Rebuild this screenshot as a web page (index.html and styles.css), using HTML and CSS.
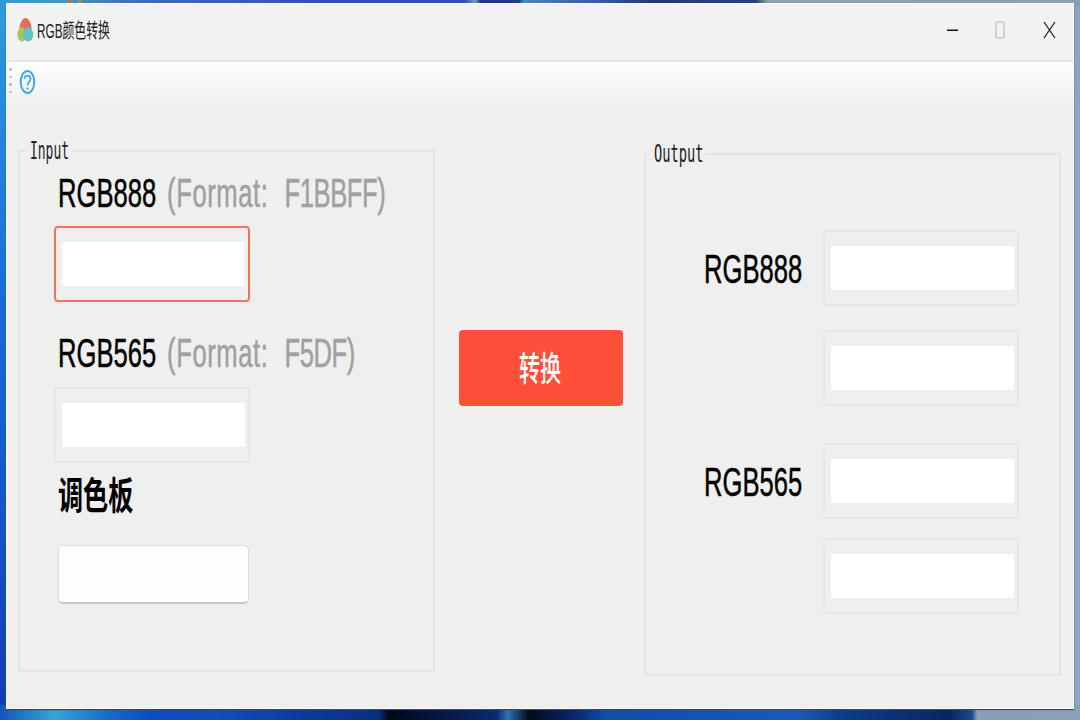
FILE: index.html
```html
<!DOCTYPE html>
<html lang="zh">
<head>
<meta charset="utf-8">
<title>RGB颜色转换</title>
<link rel="stylesheet" href="styles.css">
</head>
<body>
<div class="desktop">
  <svg class="wallpaper" width="1080" height="720" viewBox="0 0 1080 720" aria-hidden="true">
    <defs>
      <linearGradient id="top" x1="0" x2="1" y1="0" y2="0">
        <stop offset="0" stop-color="#2f9ad6"/><stop offset=".06" stop-color="#4a93bf"/>
        <stop offset=".13" stop-color="#3a6fb5"/><stop offset=".3" stop-color="#2c52ad"/>
        <stop offset=".43" stop-color="#2a50a8"/><stop offset=".44" stop-color="#6aa0c0"/>
        <stop offset=".445" stop-color="#24358a"/><stop offset=".48" stop-color="#24358a"/>
        <stop offset=".485" stop-color="#4a86b8"/><stop offset=".56" stop-color="#2f5aa5"/>
        <stop offset=".6" stop-color="#233a75"/><stop offset=".7" stop-color="#253f7d"/>
        <stop offset=".71" stop-color="#8b9cac"/><stop offset="1" stop-color="#8b9fb3"/>
      </linearGradient>
      <linearGradient id="bottom" x1="0" x2="1" y1="0" y2="0">
        <stop offset="0" stop-color="#1554b8"/><stop offset=".05" stop-color="#38a4d6"/>
        <stop offset=".1" stop-color="#1a6ac8"/><stop offset=".14" stop-color="#0c4cc0"/>
        <stop offset=".2" stop-color="#0f4fb8"/><stop offset=".28" stop-color="#0b3c9a"/>
        <stop offset=".35" stop-color="#0a2f80"/><stop offset=".36" stop-color="#020818"/>
        <stop offset=".46" stop-color="#0a2a70"/><stop offset=".47" stop-color="#3070c0"/>
        <stop offset=".49" stop-color="#020818"/><stop offset=".54" stop-color="#0a2f80"/>
        <stop offset=".56" stop-color="#0c50a8"/><stop offset=".74" stop-color="#1a5ab5"/>
        <stop offset=".78" stop-color="#0c3c8a"/><stop offset=".88" stop-color="#0a2560"/>
        <stop offset=".9" stop-color="#1a4a90"/><stop offset=".905" stop-color="#8a9fb5"/>
        <stop offset="1" stop-color="#8aa0b8"/>
      </linearGradient>
      <linearGradient id="left" x1="0" x2="0" y1="0" y2="1">
        <stop offset="0" stop-color="#2e9be0"/><stop offset=".4" stop-color="#1a6fd0"/>
        <stop offset="1" stop-color="#0d3fae"/>
      </linearGradient>
    </defs>
    <rect x="0" y="0" width="1080" height="720" fill="#8aa6c4"/>
    <rect x="0" y="0" width="1080" height="6" fill="url(#top)"/>
    <rect x="0" y="0" width="7" height="720" fill="url(#left)"/>
    <rect x="0" y="705" width="1080" height="15" fill="url(#bottom)"/>
    <rect x="68" y="0" width="2" height="4" fill="#a87d30"/>
    <rect x="71" y="0" width="1" height="4" fill="#a87d30"/>
    <rect x="79" y="0" width="2" height="4" fill="#c09030"/>
  </svg>

  <div class="window">
    <header class="titlebar">
      <svg class="app-icon" width="18" height="26" viewBox="0 0 18 26" aria-hidden="true">
        <path d="M8.500 1 C12 1 14.500 7 14.500 12 C14.500 17 12 20 8.500 20 C5 20 2.500 17 2.500 12 C2.500 7 5 1 8.500 1 Z" fill="#e2705f"/>
        <ellipse cx="4.800" cy="17.500" rx="4.500" ry="7" fill="#a9c75a"/>
        <ellipse cx="11" cy="17.500" rx="5.200" ry="7" fill="#60c3c6"/>
      </svg>
      <div class="title-clip"><span class="title-text">RGB颜色转换</span></div>
      <div class="win-controls">
        <svg width="13" height="3" viewBox="0 0 13 3" class="ctl-min" aria-hidden="true"><rect x="1" y="0.500" width="11" height="1.500" fill="#111"/></svg>
        <span class="ctl-max"></span>
        <svg width="13" height="18" viewBox="0 0 13 18" class="ctl-close" aria-hidden="true"><path d="M1 1 L12 17 M12 1 L1 17" stroke="#222" stroke-width="1.300" fill="none"/></svg>
      </div>
    </header>

    <div class="toolbar">
      <div class="grip"><i></i><i></i><i></i><i></i></div>
      <svg class="help" width="17" height="26" viewBox="0 0 17 26" aria-hidden="true">
        <ellipse cx="8.500" cy="13" rx="6.800" ry="11" fill="none" stroke="#3daaea" stroke-width="2"/>
        <path d="M5.500 10 C5.500 5.500 11.500 5.500 11.500 10 C11.500 13 8.500 13 8.500 16.500" fill="none" stroke="#3daaea" stroke-width="1.800"/>
        <rect x="7.500" y="18.500" width="2" height="2" fill="#3daaea"/>
      </svg>
    </div>

    <main class="content">
      <section class="group group-input">
        <div class="legend"><span class="legend-text">Input</span></div>
        <div class="label label-first"><span class="squeeze">RGB888<span class="hint"><span class="hint-key">(Format:</span>&nbsp; <span class="hint-value">F1BBFF)</span></span></span></div>
        <div class="field field-active"><div class="fill"></div></div>
        <div class="label label-second"><span class="squeeze">RGB565<span class="hint"><span class="hint-key">(Format:</span>&nbsp; <span class="hint-value">F5DF)</span></span></span></div>
        <div class="field"><div class="fill"></div></div>
        <div class="label label-third"><span class="squeeze cjk">调色板</span></div>
        <div class="palette"></div>
      </section>

      <button class="convert" type="button"><span class="convert-text">转换</span></button>

      <section class="group group-output">
        <div class="legend"><span class="legend-text">Output</span></div>
        <div class="out-row out-row-1">
          <div class="label out-label"><span class="squeeze">RGB888</span></div>
          <div class="field"><div class="fill"></div></div>
        </div>
        <div class="out-row out-row-2">
          <div class="label out-label"></div>
          <div class="field"><div class="fill"></div></div>
        </div>
        <div class="out-row out-row-3">
          <div class="label out-label"><span class="squeeze">RGB565</span></div>
          <div class="field"><div class="fill"></div></div>
        </div>
        <div class="out-row out-row-4">
          <div class="label out-label"></div>
          <div class="field"><div class="fill"></div></div>
        </div>
      </section>
    </main>
  </div>
</div>
</body>
</html>
```

FILE: styles.css
```css
* { box-sizing: border-box; }
html, body { margin: 0; padding: 0; }
body { font-family: "Liberation Sans", "Noto Sans CJK SC", sans-serif; }

.desktop { position: relative; width: 1080px; height: 720px; overflow: hidden; background: #8aa6c4; }
.wallpaper { position: absolute; left: 0; top: 0; display: block; }

.window {
  position: absolute; left: 6px; top: 3px; width: 1068px; height: 706px;
  display: flex; flex-direction: column;
  background: #efefef; border: 1px solid #fafafa;
  box-shadow: 0 1px 1px #3a4660;
}

.titlebar {
  height: 58px; flex: none; display: flex; align-items: center;
  background: #f2f2f2; border-bottom: 2px solid #e6e6e6;
  padding: 0 0 2px 10px;
}
.app-icon { flex: none; margin-top: -2px; }
.title-clip { width: 74px; margin-left: 2px; white-space: nowrap; }
.title-text {
  display: inline-block; transform: scaleX(.59); transform-origin: left center;
  font: 20px/24px "Liberation Sans", "Noto Sans CJK SC", sans-serif; color: #222;
}
.win-controls { margin-left: auto; display: flex; align-items: center; margin-top: -2px; }
.ctl-min { display: block; margin-right: 36px; }
.ctl-max { display: block; width: 10px; height: 18px; border: 2px solid #d2d2d2; border-radius: 2px; margin-right: 38px; }
.ctl-close { display: block; margin-right: 17px; }

.toolbar {
  height: 42px; flex: none; display: flex; align-items: flex-start;
  background: linear-gradient(#fcfcfc, #fbfbfb 30%, #efefef);
  padding: 5px 0 0 2px;
}
.grip { display: flex; flex-direction: column; gap: 5px; margin-top: 1px; }
.grip i { display: block; width: 3px; height: 2.5px; border-radius: 50%; background: #bbb; }
.help { flex: none; margin: 2px 0 0 7px; }

.content { flex: 1; display: flex; align-items: flex-start; padding-left: 11px; }

.group { position: relative; width: 417px; border: 2px solid #e4e4e4; flex: none; }
.group-input { margin-top: 46px; height: 522px; padding: 0 0 0 34px; }
.group-output { margin-top: 49px; height: 523px; padding: 0 0 0 58px; }

.legend { position: absolute; left: 6px; top: -13px; width: 46px; height: 24px; background: #efefef; padding-left: 4px; }
.legend-text {
  display: inline-block; transform: scaleX(.54); transform-origin: left center;
  font: 24px/24px "DejaVu Sans Mono", monospace; color: #222; white-space: nowrap;
}
.group-output .legend { left: 3px; top: -13px; width: 57px; padding-left: 5px; }
.group-output .legend-text { transform: scaleX(.57); }

.label { height: 40px; line-height: 40px; font-size: 40px; color: #000; white-space: nowrap; }
.squeeze { display: inline-block; transform: scaleX(.64); transform-origin: left center; -webkit-text-stroke: .5px currentColor; }
.hint { color: #a0a0a0; margin-left: 17px; }
.hint-key { letter-spacing: .9px; }
.hint-value { letter-spacing: -.7px; margin-left: 3px; }
.cjk { font-family: "Noto Sans CJK SC", sans-serif; font-size: 38px; font-weight: 700; transform: scaleX(.66); -webkit-text-stroke: 0; }
.label-first { margin: 21px 0 13px 4px; }
.label-second { margin: 31px 0 14px 4px; }
.label-third { margin: 10px 0 32px 4px; }

.field {
  width: 196px; height: 76px; flex: none;
  padding: 14px 3px 14px 6px;
  border: 2px solid #e6e6e6; border-radius: 4px;
}
.field-active { border-color: #f9705c; }
.fill { height: 100%; background: #fff; }

.palette {
  margin-left: 4px; width: 191px; height: 59px;
  background: #fdfdfd; border: 1px solid #dcdcdc; border-bottom: 2px solid #c8c8c8; border-radius: 5px;
}

.convert {
  flex: none; width: 164px; height: 76px; margin: 226px 21px 0 24px;
  background: #ff4f38; border: 0; border-radius: 4px; padding: 0 2px 2px 0;
  display: flex; align-items: center; justify-content: center;
}
.convert-text {
  display: inline-block; transform: scaleX(.62);
  font: 500 34px/40px "Noto Sans CJK SC", sans-serif; color: #fff; white-space: nowrap;
}

.out-row { display: flex; align-items: center; }
.out-label { width: 119px; flex: none; padding-top: 2px; line-height: 38px; }
.out-row-1 { margin-top: 75px; }
.out-row-2 { margin-top: 24px; }
.out-row-3 { margin-top: 37px; }
.out-row-4 { margin-top: 19px; }
```
